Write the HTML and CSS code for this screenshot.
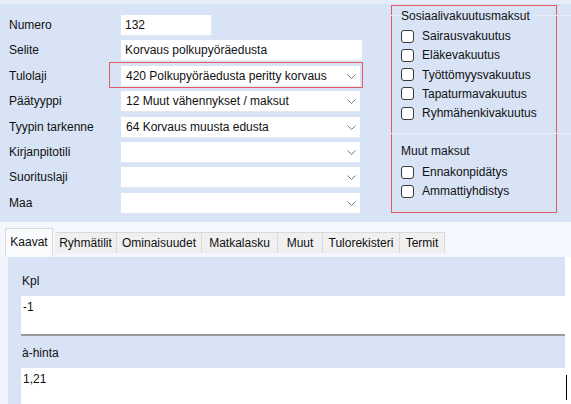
FILE: index.html
```html
<!DOCTYPE html>
<html>
<head>
<meta charset="utf-8">
<link rel="stylesheet" href="styles.css">
</head>
<body>
<div class="top">
  <div class="form">
    <div class="lbl">Numero</div><div class="field short">132</div>
    <div class="lbl">Selite</div><div class="field">Korvaus polkupyöräedusta</div>
    <div class="lbl">Tulolaji</div><div class="field select marked">420 Polkupyöräedusta peritty korvaus<svg class="chev" viewBox="0 0 9 5"><path d="M0.5 0.5 L4.5 4.5 L8.5 0.5"/></svg></div>
    <div class="lbl">Päätyyppi</div><div class="field select">12 Muut vähennykset / maksut<svg class="chev" viewBox="0 0 9 5"><path d="M0.5 0.5 L4.5 4.5 L8.5 0.5"/></svg></div>
    <div class="lbl">Tyypin tarkenne</div><div class="field select">64 Korvaus muusta edusta<svg class="chev" viewBox="0 0 9 5"><path d="M0.5 0.5 L4.5 4.5 L8.5 0.5"/></svg></div>
    <div class="lbl">Kirjanpitotili</div><div class="field select"><svg class="chev" viewBox="0 0 9 5"><path d="M0.5 0.5 L4.5 4.5 L8.5 0.5"/></svg></div>
    <div class="lbl">Suorituslaji</div><div class="field select"><svg class="chev" viewBox="0 0 9 5"><path d="M0.5 0.5 L4.5 4.5 L8.5 0.5"/></svg></div>
    <div class="lbl">Maa</div><div class="field select"><svg class="chev" viewBox="0 0 9 5"><path d="M0.5 0.5 L4.5 4.5 L8.5 0.5"/></svg></div>
  </div>
  <div class="side">
    <div class="group">
      <div class="gtitle">Sosiaalivakuutusmaksut</div>
      <div class="checks">
        <label class="chk"><span class="box"></span>Sairausvakuutus</label>
        <label class="chk"><span class="box"></span>Eläkevakuutus</label>
        <label class="chk"><span class="box"></span>Työttömyysvakuutus</label>
        <label class="chk"><span class="box"></span>Tapaturmavakuutus</label>
        <label class="chk"><span class="box"></span>Ryhmähenkivakuutus</label>
      </div>
    </div>
    <div class="group second">
      <div class="gtitle">Muut maksut</div>
      <div class="checks">
        <label class="chk"><span class="box"></span>Ennakonpidätys</label>
        <label class="chk"><span class="box"></span>Ammattiyhdistys</label>
      </div>
    </div>
  </div>
</div>
<div class="tabstrip">
  <div class="tab active">Kaavat</div>
  <div class="tab">Ryhmätilit</div>
  <div class="tab">Ominaisuudet</div>
  <div class="tab">Matkalasku</div>
  <div class="tab">Muut</div>
  <div class="tab">Tulorekisteri</div>
  <div class="tab">Termit</div>
</div>
<div class="panelwrap">
  <div class="panel">
    <div class="plabel">Kpl</div>
    <div class="area tall">-1</div>
    <div class="plabel second">à-hinta</div>
    <div class="area">1,21</div>
  </div>
  <div class="rightedge"><span class="caret"></span></div>
</div>
</body>
</html>
```

FILE: styles.css
```css
html, body {
  margin: 0;
  padding: 0;
  width: 571px;
  height: 404px;
  overflow: hidden;
  background: #ffffff;
  font-family: "Liberation Sans", Arial, sans-serif;
  font-size: 12px;
  color: #111;
}

.top {
  display: flex;
  height: 222px;
  background: #d8e3f6;
  box-sizing: border-box;
  border-top: 4px solid #e6edf9;
}

.form {
  display: grid;
  grid-template-columns: 112px 241px;
  grid-auto-rows: 21px;
  row-gap: 4.4px;
  padding: 11px 0 0 9px;
  align-items: center;
  align-content: start;
}

.lbl {
  line-height: 21px;
  white-space: nowrap;
}

.field {
  position: relative;
  height: 21px;
  box-sizing: border-box;
  background: #fff;
  border-bottom: 1px solid #e2e6ee;
  padding: 0 0 0 4px;
  line-height: 20px;
  white-space: nowrap;
}

.field.short {
  width: 91px;
  border-right: 1px solid #e2e6ee;
}

.field.select {
  width: 239px;
  padding-left: 5px;
}

.chev {
  position: absolute;
  right: 4px;
  top: 8px;
  width: 9px;
  height: 5px;
  fill: none;
  stroke: #777;
  stroke-width: 1;
}

.marked::after {
  content: "";
  position: absolute;
  left: -12px;
  top: -4px;
  right: -3px;
  bottom: -2px;
  border: 1.5px solid #e35a62;
}

.side {
  flex: 1;
  padding: 0 0 0 29px;
  position: relative;
}

.side::before {
  content: "";
  position: absolute;
  left: 29px;
  top: 1px;
  width: 166px;
  height: 208px;
  border: 1.5px solid #e35a62;
  box-sizing: border-box;
}

.group {
  border-top: 1px solid #e5ebf7;
  margin-top: 11px;
  padding: 0 0 0 10px;
  position: relative;
}

.group.second {
  margin-top: 13px;
}

.gtitle {
  display: block;
  width: fit-content;
  margin-top: -8px;
  line-height: 16px;
  background: #d8e3f6;
  padding-right: 4px;
}

.second .gtitle {
  margin-top: 9px;
}

.checks {
  display: flex;
  flex-direction: column;
  gap: 5.25px;
  padding: 5px 0 0 0;
}

.chk {
  display: flex;
  align-items: center;
  height: 14px;
  gap: 8px;
  white-space: nowrap;
}

.box {
  width: 13px;
  height: 13px;
  box-sizing: border-box;
  border: 1px solid #3a3a3a;
  border-radius: 3px;
  background: #fff;
}

.second .checks {
  padding-top: 6px;
}

.tabstrip {
  display: flex;
  align-items: flex-end;
  height: 35px;
  background: #f4f7fd;
  padding-left: 5px;
  box-sizing: border-box;
}

.tab {
  height: 21px;
  line-height: 20px;
  text-align: center;
  background: #f0f0f0;
  border: 1px solid #dadada;
  border-bottom: none;
  border-left: none;
  box-sizing: border-box;
  margin-bottom: 4px;
  white-space: nowrap;
}

.tab:nth-child(2) { width: 62px; margin-left: 2px; }
.tab:nth-child(3) { width: 85px; }
.tab:nth-child(4) { width: 76px; }
.tab:nth-child(5) { width: 45px; }
.tab:nth-child(6) { width: 77px; }
.tab:nth-child(7) { width: 45px; }

.tab.active {
  width: 48px;
  height: 29px;
  line-height: 26px;
  background: #fafbfd;
  border-left: 1px solid #dadada;
  margin-bottom: 0;
  position: relative;
  z-index: 1;
}

.panelwrap {
  display: flex;
  height: 147px;
  background: #f1f4fa;
  padding-left: 8px;
}

.panel {
  width: 557px;
  background: #d8e3f6;
  padding: 16px 0 0 13px;
  box-sizing: border-box;
  display: flex;
  flex-direction: column;
}

.plabel {
  line-height: 16px;
  padding-left: 1px;
}

.plabel.second {
  margin-top: 9px;
}

.area {
  background: #fff;
  margin-top: 7px;
  height: 40px;
  padding: 3px 0 0 2px;
  box-sizing: border-box;
  line-height: 16px;
}

.area.tall {
  height: 44px;
  border-bottom: 2px solid #9a9a9a;
}

.rightedge {
  flex: 1;
  background: #fff;
  position: relative;
}

.caret {
  position: absolute;
  left: 1px;
  top: 118px;
  width: 1px;
  height: 25px;
  background: #000;
}
```
